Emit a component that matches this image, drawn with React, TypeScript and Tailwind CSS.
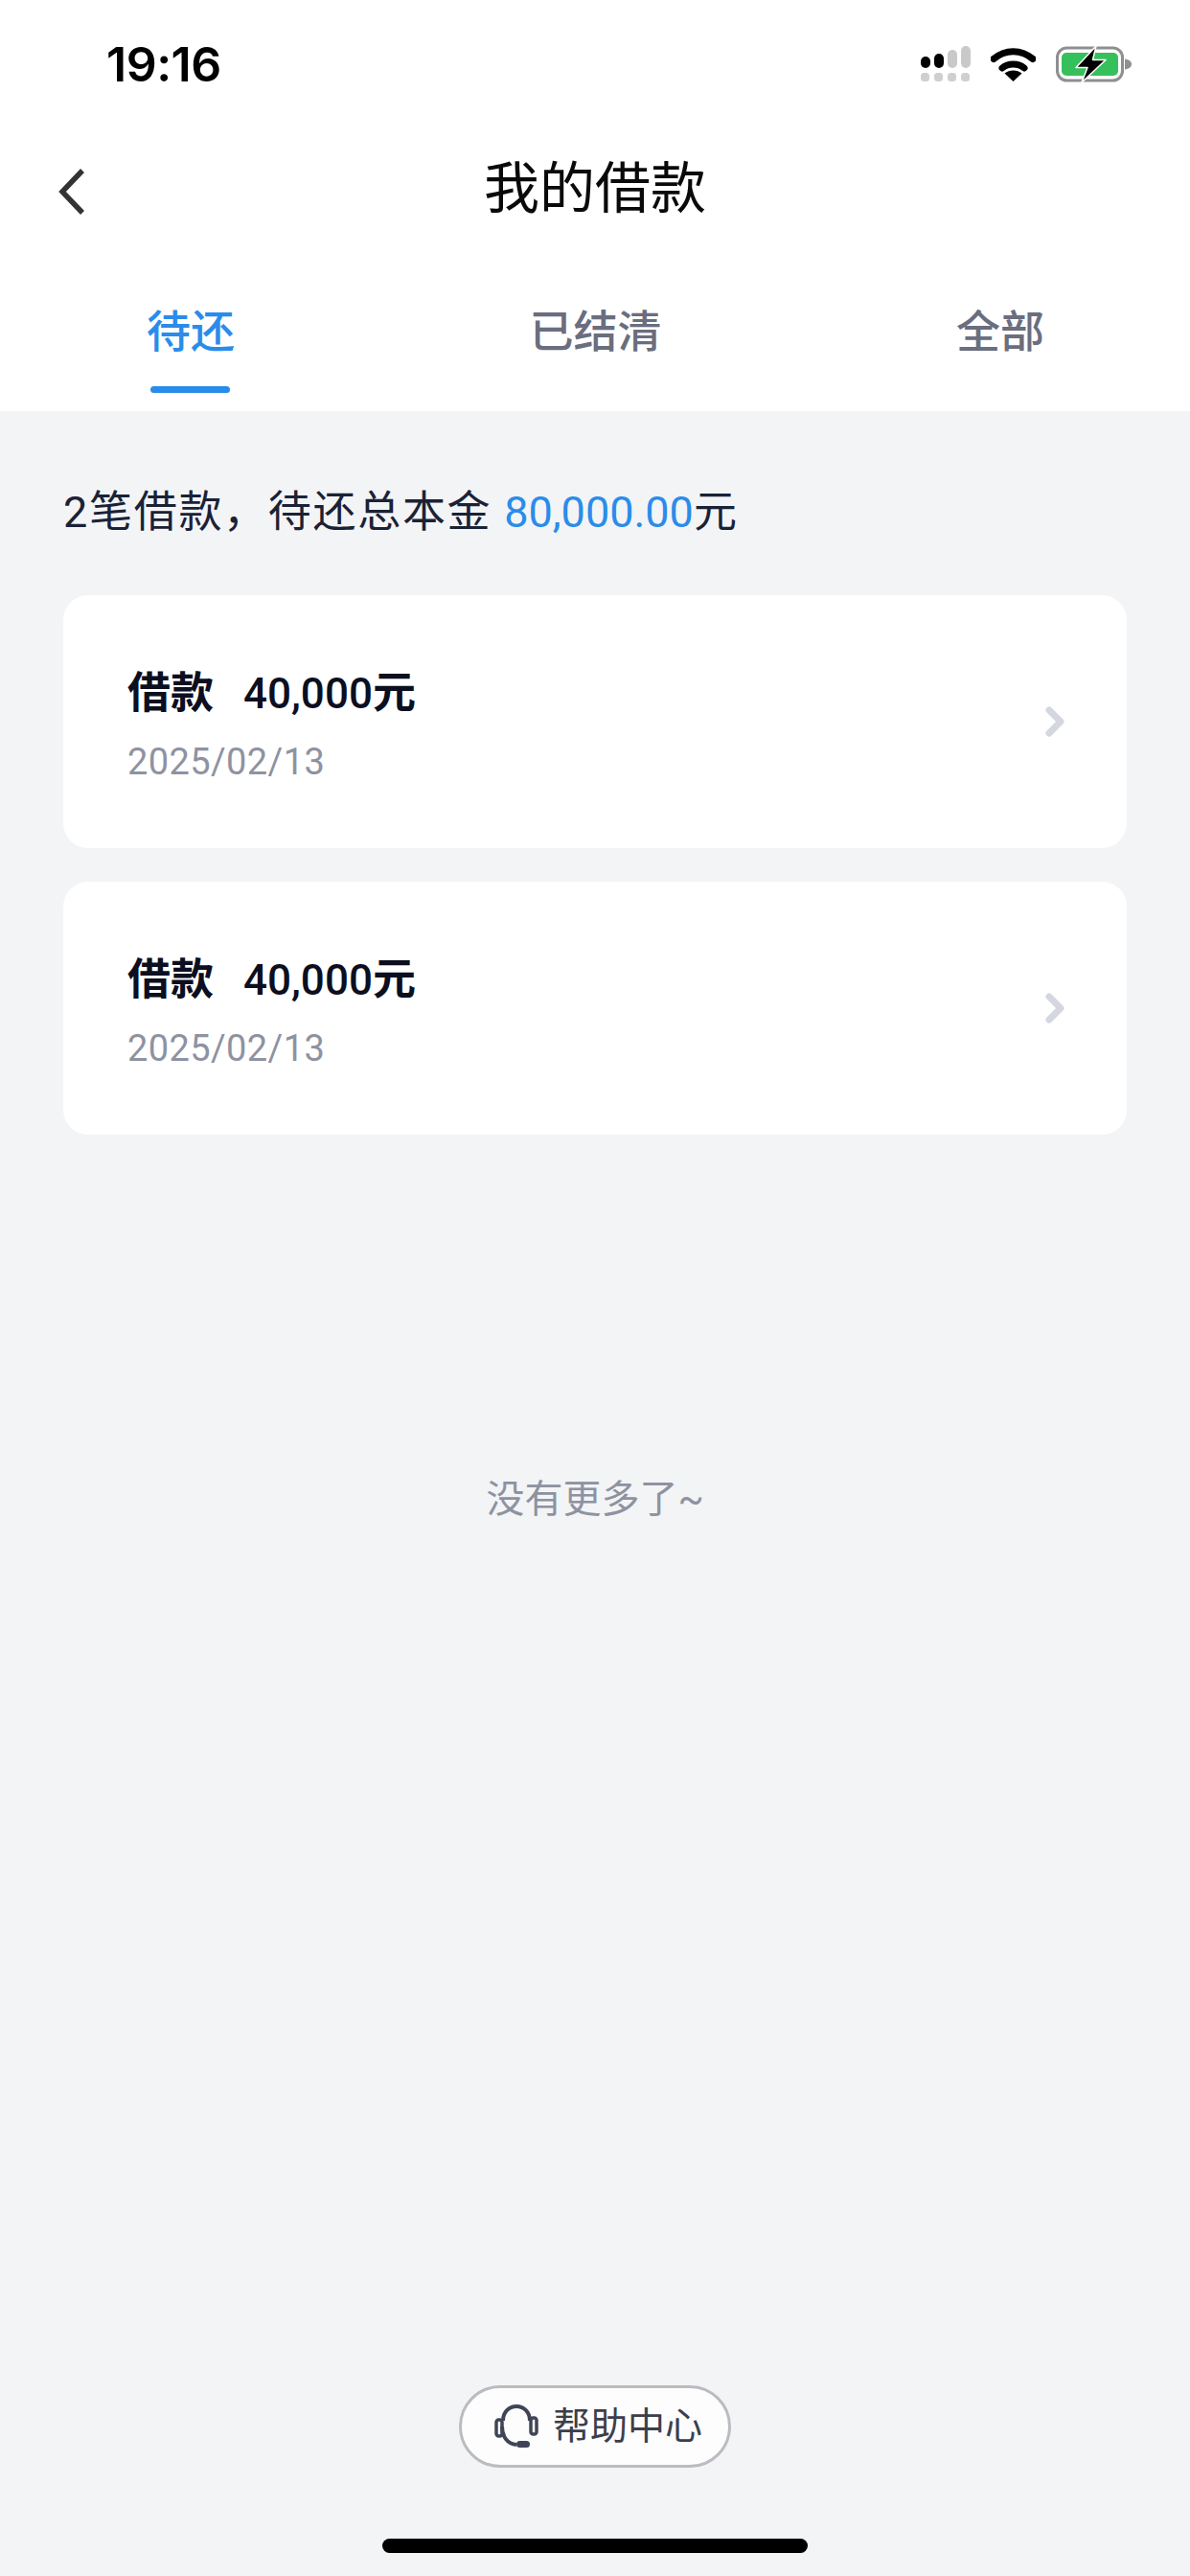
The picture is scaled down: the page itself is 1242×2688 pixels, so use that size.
const cjk = "font-['Roboto','Noto_Sans_CJK_SC',sans-serif]";

function Signal() {
  return (
    <svg width="52" height="37" viewBox="0 0 52 37" className="shrink-0">
      <rect x="0" y="11" width="10" height="12" rx="5" fill="#000" />
      <rect x="14" y="8" width="10" height="15" rx="5" fill="#000" />
      <rect x="28" y="4" width="10" height="19" rx="5" fill="#c9c9c9" />
      <rect x="42" y="0" width="10" height="23" rx="5" fill="#c9c9c9" />
      {[0, 14, 28, 42].map((x) => (
        <rect key={x} x={x} y="28" width="9" height="9" rx="3.5" fill="#cfcfcf" />
      ))}
    </svg>
  );
}

function Wifi() {
  return (
    <svg width="47" height="37" viewBox="0 0 47 37" className="shrink-0">
      <path d="M3 13.5C15 3 32 3 44 13.5" fill="none" stroke="#000" strokeWidth="7" strokeLinecap="round" />
      <path d="M12 23C18 17.5 29 17.5 35 23" fill="none" stroke="#000" strokeWidth="7" strokeLinecap="round" />
      <path d="M23.5 37L14.5 28.5C19.5 24.5 27.5 24.5 32.5 28.5Z" fill="#000" />
    </svg>
  );
}

function Battery() {
  return (
    <svg width="80" height="38" viewBox="0 0 80 38" className="shrink-0">
      <rect x="1.5" y="2" width="68" height="34" rx="10" fill="none" stroke="#8f8f8f" strokeWidth="3" />
      <rect x="6" y="7" width="59" height="24" rx="5" fill="#36c05c" />
      <path d="M72 13.5C76 14 79 16 79 19C79 22 76 24 72 24.5Z" fill="#8f8f8f" />
      <path d="M42 0L21 22.5H33L27 38L52 14.5H38.5Z" fill="#000" stroke="#fff" strokeWidth="1.5" strokeLinejoin="round" />
    </svg>
  );
}

function Chevron() {
  return (
    <svg width="24" height="36" viewBox="0 0 24 36" className="shrink-0">
      <path d="M6 6L18 18L6 30" fill="none" stroke="#d5d7e0" strokeWidth="7" strokeLinecap="round" strokeLinejoin="round" />
    </svg>
  );
}

function LoanCard() {
  return (
    <div className="flex h-[264px] items-center justify-between rounded-[26px] bg-white pl-[67px] pr-[63px]">
      <div className="flex flex-col pt-[5px]">
        <div className="flex h-[64px] items-center text-[45px] font-medium text-[#0b0f20]">
          <span className="font-bold">借款</span>
          <span className="ml-[31px] text-[44px]">40,000</span>
          <span className="font-bold">元</span>
        </div>
        <div className="mt-[14px] h-[50px] text-[38px] leading-[50px] tracking-[0.4px] text-[#8e92a1]">2025/02/13</div>
      </div>
      <Chevron />
    </div>
  );
}

export default function App() {
  return (
    <div className={`flex h-[2688px] w-[1242px] flex-col overflow-hidden bg-[#f3f4f6] ${cjk}`}>
      <header className="h-[429px] shrink-0 bg-white">
        <div className="flex h-[135px] items-center justify-between pb-[2px] pl-[111px] pr-[60px]">
          <span className="font-['Inter',sans-serif] text-[50px] font-semibold leading-none tracking-[-0.5px] text-black">19:16</span>
          <div className="flex items-center gap-[21px]">
            <Signal />
            <Wifi />
            <Battery />
          </div>
        </div>
        <div className="relative flex h-[124px] items-center justify-center">
          <svg width="30" height="50" viewBox="0 0 30 50" className="absolute left-[60px] top-[40px]">
            <path d="M26 3L5 25L26 47" fill="none" stroke="#333" strokeWidth="5.5" />
          </svg>
          <span className="text-[58px] leading-none text-[#0a0a0a]">我的借款</span>
        </div>
        <div className="relative mt-[42px] flex h-[90px] items-center justify-between pl-[153px] pr-[152px]">
          <span className="text-[46px] font-medium leading-none text-[#2a8cea]">待还</span>
          <span className="text-[46px] font-medium leading-none text-[#6a6e7e]">已结清</span>
          <span className="text-[46px] font-medium leading-none text-[#6a6e7e]">全部</span>
          <div className="absolute bottom-[-19px] left-[157px] h-[7px] w-[83px] rounded-full bg-[#2a8cea]" />
        </div>
      </header>

      <main className="flex flex-1 flex-col px-[66px]">
        <p className="mt-[82px] h-[48px] text-[45px] leading-[48px] tracking-[1.7px] text-[#1a2236]">
          2笔借款，待还总本金 <span className="tracking-normal text-[#2a8cea]">80,000.00</span>元
        </p>
        <div className="mt-[62px] flex flex-col gap-[35px]">
          <LoanCard />
          <LoanCard />
        </div>
        <p className="mt-[356px] text-center text-[40px] leading-[50px] text-[#8e92a1]">没有更多了~</p>
        <div className="mt-auto flex justify-center">
          <div className="flex h-[86px] w-[284px] items-center gap-[14px] rounded-full border-[3px] border-[#bbbcc0] bg-[#fdfdfe] pl-[33px]">
            <svg width="48" height="48" viewBox="0 0 48 48" className="shrink-0">
              <path d="M10 18C10 9 16 3 24 3C32 3 38 9 38 18" fill="none" stroke="#3f4556" strokeWidth="4" />
              <path d="M9 24C9 34 14 42 24 43" fill="none" stroke="#3f4556" strokeWidth="4" />
              <rect x="3" y="17" width="6" height="17" rx="2.5" fill="none" stroke="#3f4556" strokeWidth="3.5" />
              <rect x="39" y="15" width="6" height="17" rx="2.5" fill="none" stroke="#3f4556" strokeWidth="3.5" />
              <rect x="24" y="39" width="14" height="7" rx="3.5" fill="#3f4556" />
            </svg>
            <span className="text-[39px] leading-none text-[#3b3f4c]">帮助中心</span>
          </div>
        </div>
      </main>

      <div className="flex h-[113px] shrink-0 justify-center pt-[74px]">
        <div className="h-[15px] w-[444px] rounded-full bg-black" />
      </div>
    </div>
  );
}
